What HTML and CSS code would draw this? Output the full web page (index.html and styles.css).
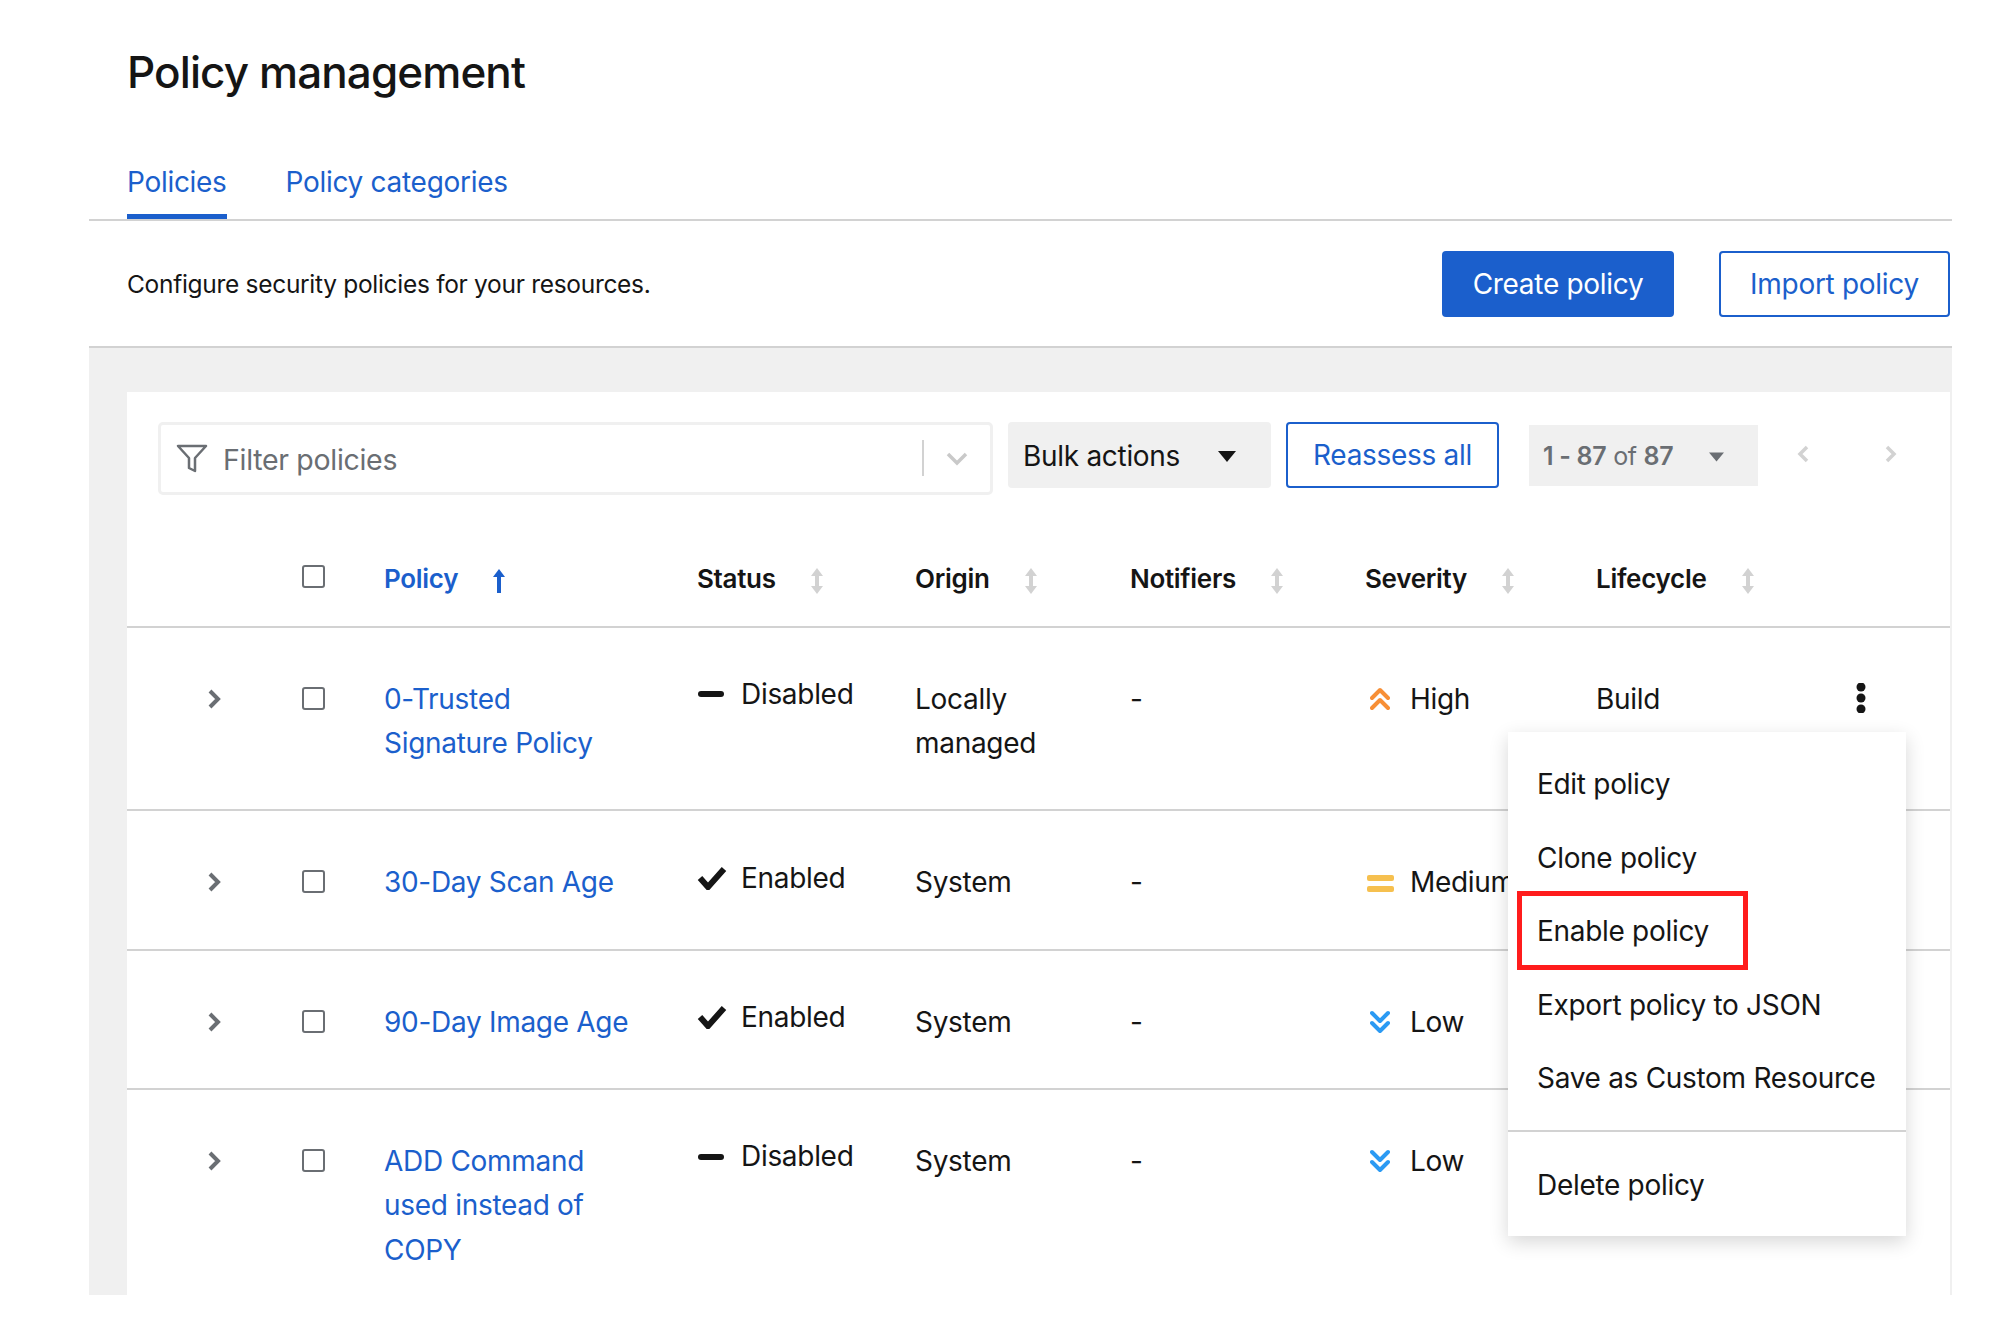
FILE: index.html

```html
<!DOCTYPE html>
<html lang="en">
<head>
<meta charset="UTF-8" />
<title>Policy management</title>
<link rel="stylesheet" href="styles.css">
</head>
<body>

<svg class="icon-defs" width="0" height="0" aria-hidden="true">
  <defs>
    <symbol id="sort" viewBox="0 0 14 26"><path d="M7 0l6 8H9v10h4l-6 8-6-8h4V8H1z" fill="currentColor"/></symbol>
    <symbol id="sort-up" viewBox="0 0 14 26"><path d="M7 1l6 8H9v16H5V9H1z" fill="currentColor"/></symbol>
    <symbol id="expand" viewBox="0 0 15 20"><path d="M3 2l8 8-8 8" fill="none" stroke="currentColor" stroke-width="4"/></symbol>
    <symbol id="dash" viewBox="0 0 28 8"><rect x="1" y="1" width="26" height="6" rx="3" fill="currentColor"/></symbol>
    <symbol id="check" viewBox="0 0 30 24"><path d="M3 12l8 9L27 3" fill="none" stroke="currentColor" stroke-width="6"/></symbol>
    <symbol id="high" viewBox="0 0 20 24"><path d="M2 11l8-8 8 8M2 21l8-8 8 8" fill="none" stroke="currentColor" stroke-width="4" stroke-linecap="round" stroke-linejoin="round"/></symbol>
    <symbol id="low" viewBox="0 0 20 24"><path d="M2 3l8 8 8-8M2 13l8 8 8-8" fill="none" stroke="currentColor" stroke-width="4" stroke-linecap="round" stroke-linejoin="round"/></symbol>
    <symbol id="caret" viewBox="0 0 18 11"><path d="M0 0h18l-9 11z" fill="currentColor"/></symbol>
  </defs>
</svg>

<main class="page">
  <h1 class="page-title">Policy management</h1>

  <nav class="tabs">
    <a class="tab tab-active">Policies</a>
    <a class="tab">Policy categories</a>
  </nav>

  <div class="subheader">
    <p class="subheader-text">Configure security policies for your resources.</p>
    <div class="subheader-actions">
      <button class="btn btn-primary">Create policy</button>
      <button class="btn btn-secondary">Import policy</button>
    </div>
  </div>

  <section class="content">
    <div class="panel">

      <div class="toolbar">
        <div class="filter">
          <svg class="filter-icon" width="32" height="29" viewBox="0 0 32 29"><path d="M2 2h28L19 14v13l-6-3V14z" fill="none" stroke="currentColor" stroke-width="2.5" stroke-linejoin="round"/></svg>
          <span class="filter-text">Filter policies</span>
          <span class="filter-divider"></span>
          <svg class="filter-chevron" width="22" height="14" viewBox="0 0 22 14"><path d="M2 2l9 9 9-9" fill="none" stroke="currentColor" stroke-width="3.5"/></svg>
        </div>
        <button class="bulk">Bulk actions <svg class="caret" width="18" height="11"><use href="#caret"/></svg></button>
        <button class="btn btn-secondary btn-reassess">Reassess all</button>
        <div class="pager-count"><span><b>1 - 87</b> of <b>87</b></span> <svg class="caret-small" width="15" height="10"><use href="#caret"/></svg></div>
        <div class="pager-nav">
          <svg width="14" height="18" viewBox="0 0 14 18"><path d="M11 2L4 9l7 7" fill="none" stroke="currentColor" stroke-width="3.5"/></svg>
          <svg width="14" height="18" viewBox="0 0 14 18"><path d="M3 2l7 7-7 7" fill="none" stroke="currentColor" stroke-width="3.5"/></svg>
        </div>
      </div>

      <table class="policies">
        <colgroup>
          <col class="col-expand"><col class="col-check"><col class="col-policy"><col class="col-status">
          <col class="col-origin"><col class="col-notifiers"><col class="col-severity"><col class="col-lifecycle"><col>
        </colgroup>
        <thead>
          <tr>
            <th></th>
            <th class="th-check"><input type="checkbox" class="check"></th>
            <th class="th-active">Policy <svg class="sort" width="14" height="26"><use href="#sort-up"/></svg></th>
            <th>Status <svg class="sort" width="14" height="26"><use href="#sort"/></svg></th>
            <th>Origin <svg class="sort" width="14" height="26"><use href="#sort"/></svg></th>
            <th>Notifiers <svg class="sort" width="14" height="26"><use href="#sort"/></svg></th>
            <th>Severity <svg class="sort" width="14" height="26"><use href="#sort"/></svg></th>
            <th>Lifecycle <svg class="sort" width="14" height="26"><use href="#sort"/></svg></th>
            <th></th>
          </tr>
        </thead>
        <tbody>
          <tr>
            <td><svg class="expand" width="15" height="20"><use href="#expand"/></svg></td>
            <td><input type="checkbox" class="check"></td>
            <td><a class="policy-link">0-Trusted Signature Policy</a></td>
            <td class="td-status"><div class="status"><svg class="status-icon" width="28" height="8"><use href="#dash"/></svg>Disabled</div></td>
            <td>Locally managed</td>
            <td>-</td>
            <td><div class="severity"><svg class="sev-high" width="20" height="24"><use href="#high"/></svg>High</div></td>
            <td>Build</td>
            <td>
              <div class="kebab-wrap">
                <svg class="kebab" width="10" height="30" viewBox="0 0 10 30"><circle cx="5" cy="4" r="4.5"/><circle cx="5" cy="15" r="4.5"/><circle cx="5" cy="26" r="4.5"/></svg>
                <div class="menu">
                  <div class="menu-item">Edit policy</div>
                  <div class="menu-item">Clone policy</div>
                  <div class="menu-item">Enable policy</div>
                  <div class="menu-item">Export policy to JSON</div>
                  <div class="menu-item">Save as Custom Resource</div>
                  <div class="menu-divider"></div>
                  <div class="menu-item">Delete policy</div>
                  <div class="highlight-box"></div>
                </div>
              </div>
            </td>
          </tr>
          <tr>
            <td><svg class="expand" width="15" height="20"><use href="#expand"/></svg></td>
            <td><input type="checkbox" class="check"></td>
            <td><a class="policy-link">30-Day Scan Age</a></td>
            <td class="td-status"><div class="status"><svg class="status-icon status-check" width="30" height="24"><use href="#check"/></svg>Enabled</div></td>
            <td>System</td>
            <td>-</td>
            <td><div class="severity"><span class="sev-medium"></span>Medium</div></td>
            <td></td>
            <td></td>
          </tr>
          <tr>
            <td><svg class="expand" width="15" height="20"><use href="#expand"/></svg></td>
            <td><input type="checkbox" class="check"></td>
            <td><a class="policy-link">90-Day Image Age</a></td>
            <td class="td-status"><div class="status"><svg class="status-icon status-check" width="30" height="24"><use href="#check"/></svg>Enabled</div></td>
            <td>System</td>
            <td>-</td>
            <td><div class="severity"><svg class="sev-low" width="20" height="24"><use href="#low"/></svg>Low</div></td>
            <td></td>
            <td></td>
          </tr>
          <tr>
            <td><svg class="expand" width="15" height="20"><use href="#expand"/></svg></td>
            <td><input type="checkbox" class="check"></td>
            <td><a class="policy-link">ADD Command used instead of COPY</a></td>
            <td class="td-status"><div class="status"><svg class="status-icon" width="28" height="8"><use href="#dash"/></svg>Disabled</div></td>
            <td>System</td>
            <td>-</td>
            <td><div class="severity"><svg class="sev-low" width="20" height="24"><use href="#low"/></svg>Low</div></td>
            <td></td>
            <td></td>
          </tr>
        </tbody>
      </table>

    </div>
  </section>
</main>

</body>
</html>
```

FILE: styles.css

```css
html, body {
  margin: 0;
  padding: 0;
  background: #fff;
  overflow: hidden;
}
body {
  color: #151515;
  font-family: Inter, "Noto Sans", sans-serif;
  font-size: 28px;
  line-height: 44.5px;
  letter-spacing: -0.3px;
}
.icon-defs {
  position: absolute;
}
.page {
  margin-left: 89px;
  width: 1863px;
  height: 1295px;
  overflow: hidden;
}
.page-title {
  margin: 0;
  padding: 39px 0 0 38px;
  font-size: 44px;
  font-weight: 500;
  line-height: 66px;
  letter-spacing: -0.9px;
}

/* Tabs */
.tabs {
  display: flex;
  gap: 59px;
  margin-top: 55px;
  padding-left: 38px;
  border-bottom: 2px solid #d2d2d2;
}
.tab {
  padding-bottom: 9px;
  border-bottom: 5px solid transparent;
  color: #1b5fcc;
}
.tab-active {
  border-bottom-color: #1b5fcc;
}

/* Subheader */
.subheader {
  display: flex;
  justify-content: space-between;
  height: 127px;
  box-sizing: border-box;
  padding: 30px 2px 0 38px;
  border-bottom: 2px solid #d2d2d2;
}
.subheader-text {
  margin: 0;
  font-size: 24.5px;
  line-height: 66px;
}
.subheader-actions {
  display: flex;
  align-items: flex-start;
  gap: 45px;
}
.btn {
  height: 66px;
  box-sizing: border-box;
  padding: 2px 0 0;
  border-radius: 4px;
  font: inherit;
  letter-spacing: inherit;
}
.btn-primary {
  width: 232px;
  border: 0;
  background: #1b5fcc;
  color: #fff;
}
.btn-secondary {
  width: 231px;
  border: 2px solid #1b5fcc;
  background: #fff;
  color: #1b5fcc;
}

/* Grey content area */
.content {
  height: 947px;
  padding: 44px 2px 0 38px;
  background: #f0f0f0;
}
.panel {
  height: 100%;
  background: #fff;
}

/* Toolbar */
.toolbar {
  display: flex;
  align-items: flex-start;
  padding: 30px 0 0 31px;
}
.filter {
  display: flex;
  align-items: center;
  width: 835px;
  height: 73px;
  box-sizing: border-box;
  padding-left: 15px;
  border: 3px solid #f0f0f0;
  border-radius: 5px;
  color: #6a6e73;
}
.filter-icon {
  flex: none;
}
.filter-text {
  flex: 1;
  margin: 4px 0 0 15px;
  font-size: 28.5px;
}
.filter-divider {
  width: 2px;
  height: 36px;
  background: #d2d2d2;
}
.filter-chevron {
  margin: 2px 22px 0 22px;
  color: #c9c9c9;
}
.bulk {
  display: flex;
  align-items: center;
  justify-content: space-between;
  width: 263px;
  height: 66px;
  box-sizing: border-box;
  margin-left: 15px;
  padding: 4px 35px 0 15px;
  border: 0;
  border-radius: 4px;
  background: #f0f0f0;
  color: #151515;
  font: inherit;
  letter-spacing: inherit;
}
.caret {
  color: #151515;
}
.btn-reassess {
  width: 213px;
  margin-left: 15px;
}
.pager-count {
  display: flex;
  align-items: center;
  justify-content: space-between;
  width: 229px;
  height: 61px;
  box-sizing: border-box;
  margin: 3px 0 0 30px;
  padding: 3px 34px 0 14px;
  background: #f0f0f0;
  color: #6a6e73;
  font-size: 25px;
}
.pager-count b {
  font-weight: 600;
}
.caret-small {
  color: #6a6e73;
}
.pager-nav {
  display: flex;
  gap: 74px;
  margin: 23px 0 0 38px;
  color: #d2d2d2;
}

/* Table */
.policies {
  width: 100%;
  table-layout: fixed;
  border-collapse: collapse;
}
.col-expand { width: 175px; }
.col-check { width: 82px; }
.col-policy { width: 313px; }
.col-status { width: 218px; }
.col-origin { width: 215px; }
.col-notifiers { width: 235px; }
.col-severity { width: 231px; }
.col-lifecycle { width: 231px; }
.policies th {
  height: 132px;
  box-sizing: border-box;
  padding: 0 0 29px;
  border-bottom: 2px solid #d2d2d2;
  vertical-align: bottom;
  text-align: left;
  font-size: 26px;
  font-weight: 600;
  line-height: 36px;
  white-space: nowrap;
}
.policies th .check {
  margin-bottom: 9px;
}
.th-active {
  color: #1b5fcc;
}
.sort {
  margin-left: 28px;
  vertical-align: -6px;
  color: #d2d2d2;
}
.th-active .sort {
  color: #1b5fcc;
}
.policies td {
  padding: 49px 0 43.75px;
  border-bottom: 2px solid #d2d2d2;
  vertical-align: top;
}
.policies .td-status {
  padding-top: 44.5px;
}
.policy-link {
  display: block;
  width: 250px;
  color: #1b5fcc;
}
.expand {
  display: block;
  margin: 12px 0 0 80px;
  color: #6a6e73;
}
.check {
  display: block;
  appearance: none;
  width: 23px;
  height: 23px;
  box-sizing: border-box;
  margin: 10px 0 0;
  border: 2px solid #6a6e73;
  border-radius: 3px;
  background: #fff;
}
.status {
  display: flex;
  align-items: center;
}
.status-icon {
  flex: none;
  margin-right: 16px;
}
.status-check {
  margin-right: 14px;
}
.severity {
  display: flex;
  align-items: center;
  white-space: nowrap;
}
.severity svg {
  flex: none;
  margin: 0 20px 0 5px;
}
.sev-high {
  color: #f78f36;
}
.sev-low {
  color: #2b9af3;
}
.sev-medium {
  flex: none;
  width: 27px;
  height: 6px;
  margin: 4px 16px 0 2px;
  border-radius: 2px;
  background: #f6c04f;
  box-shadow: 0 11px 0 #f6c04f;
  transform: translateY(-7px);
}

/* Kebab and its menu */
.kebab-wrap {
  position: relative;
  height: 44px;
  padding-top: 6px;
  box-sizing: border-box;
}
.kebab {
  display: block;
  margin-left: 29px;
  fill: #151515;
}
.menu {
  position: absolute;
  top: 55.5px;
  left: -319px;
  z-index: 10;
  width: 398px;
  box-sizing: border-box;
  padding: 16px 0 13.5px;
  background: #fff;
  box-shadow: 0 6px 18px rgba(3, 3, 3, 0.16);
}
.menu-item {
  padding-left: 29px;
  line-height: 73.5px;
  white-space: nowrap;
}
.menu-divider {
  height: 2px;
  margin: 14px 0 17px;
  background: #d2d2d2;
}
.highlight-box {
  position: absolute;
  top: 159px;
  left: 9px;
  width: 231px;
  height: 79px;
  box-sizing: border-box;
  border: 5px solid #ff1c1c;
}
```
